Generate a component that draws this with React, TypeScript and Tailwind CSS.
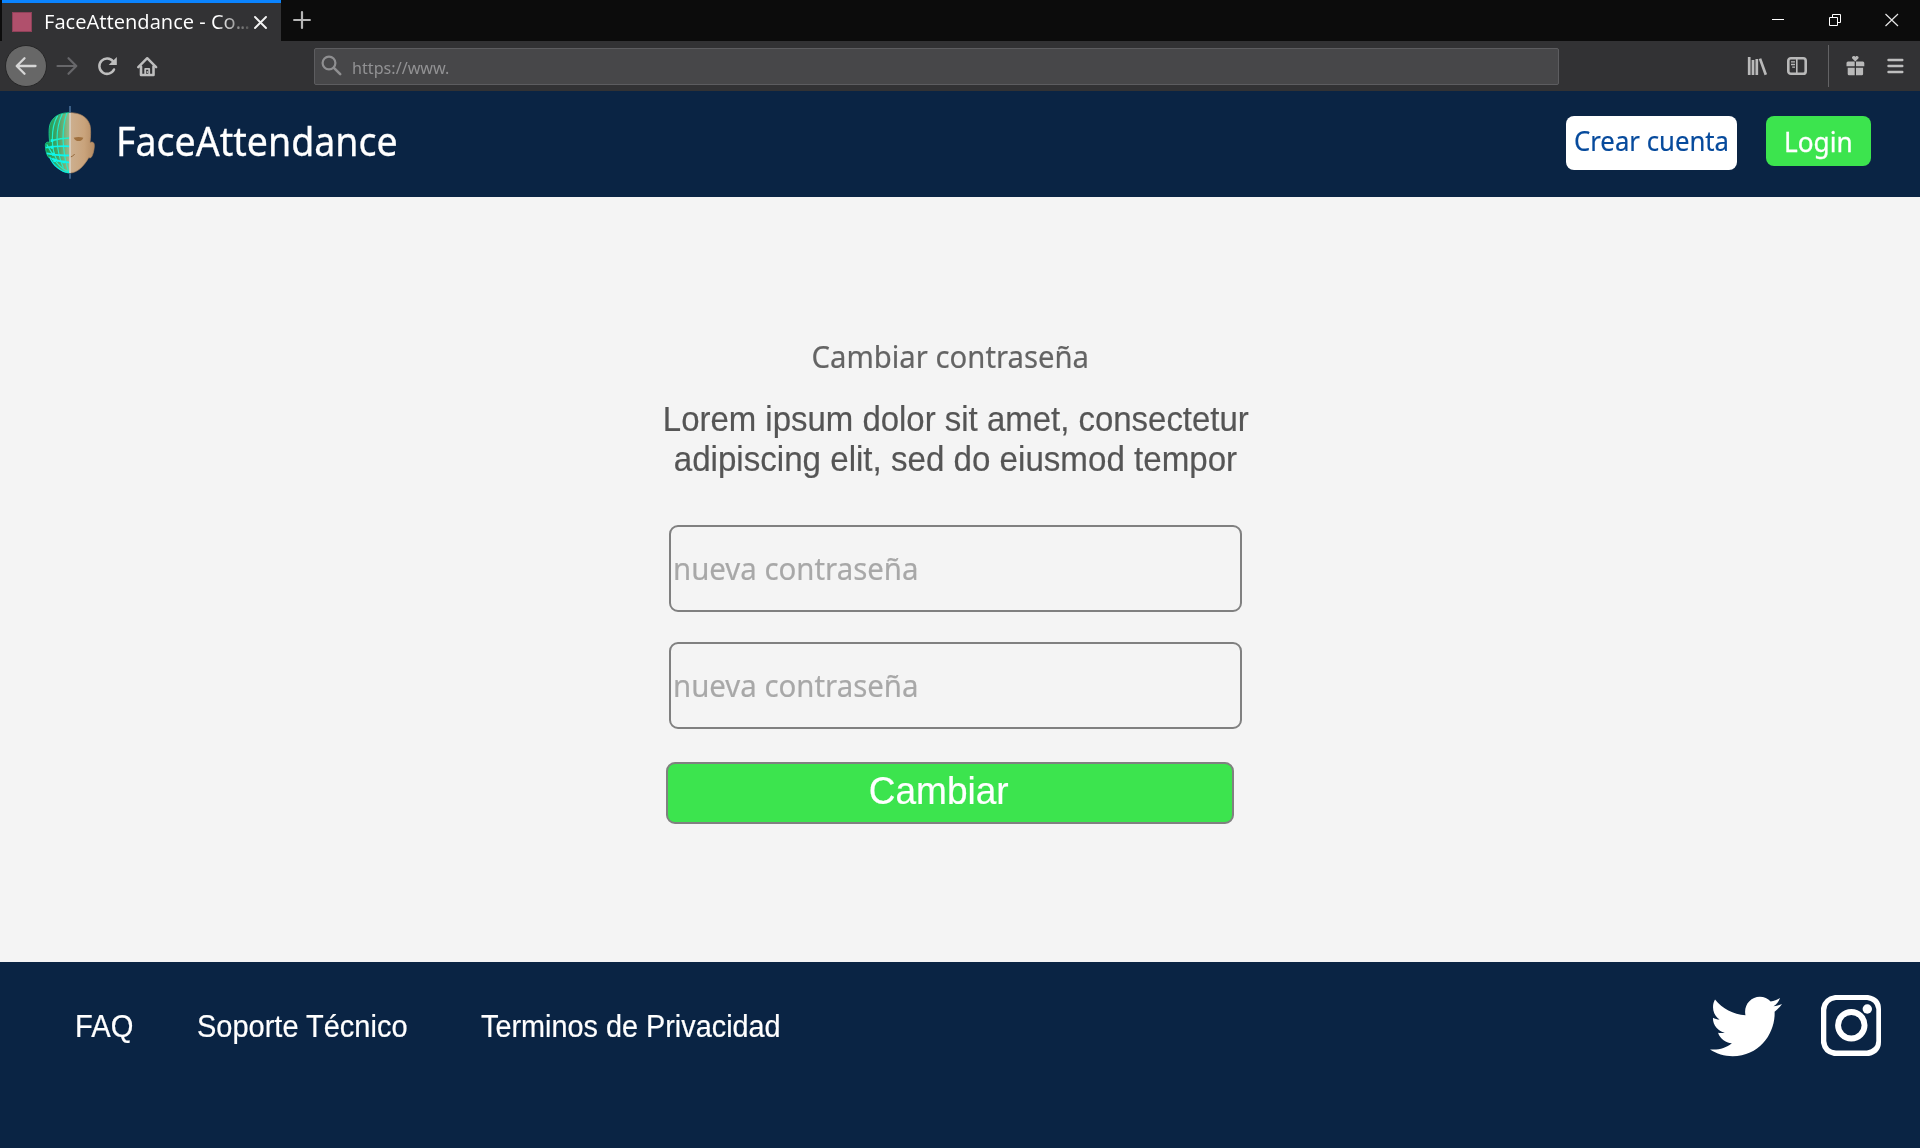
import React from "react";
import { FaTwitter } from "react-icons/fa";

const noto = "font-['Noto_Sans',sans-serif]";

function TitleBar() {
  return (
    <div className="flex h-[41px] items-stretch justify-between bg-[#0c0c0c]">
      <div className="flex">
        <div className="ml-[2px] flex w-[279px] items-center border-t-[3px] border-[#0a84ff] bg-[#323234] pl-[10px]">
          <div className="size-5 border border-[#8f4159] bg-[#b0506c]" />
          <div className={`${noto} ml-[11px] w-[206px] shrink-0 bg-linear-to-r from-white from-85% to-[#555555] bg-clip-text pl-px text-[20px] leading-[34px] whitespace-nowrap text-transparent`}>
            FaceAttendance - Co<span className="tracking-[-1px]">...</span>
          </div>
          <svg className="ml-[5px] shrink-0" width="13" height="13" viewBox="0 0 13 13" stroke="#f4f4f4" strokeWidth="1.900" strokeLinecap="round">
            <path d="M1 1l11 11M12 1L1 12" />
          </svg>
        </div>
        <svg className="mt-[11px] ml-[12px]" width="18" height="18" viewBox="0 0 18 18" stroke="#b6b6b6" strokeWidth="2.2" strokeLinecap="round">
          <path d="M9 1.1v15.8M1.1 9h15.8" />
        </svg>
      </div>
      <div className="flex items-start gap-[44px] pt-[13px] pr-[21px]">
        <svg width="13" height="14" viewBox="0 0 13 14">
          <path d="M0 6.5h12" stroke="#fff" />
        </svg>
        <svg className="mr-[-1px]" width="13" height="14" viewBox="0 0 13 14" fill="none" stroke="#fff">
          <path d="M.5 4.5h8v8h-8zM3.5 4.500v-3h8v8h-3" />
        </svg>
        <svg width="14" height="14" viewBox="0 0 14 14" stroke="#e6e6e6" strokeWidth="1.2">
          <path d="M.5 1l12.500 12M13 1L.5 13" />
        </svg>
      </div>
    </div>
  );
}

function ToolBar() {
  return (
    <div className="flex h-[50px] items-center bg-[#323234]">
      <div className="ml-[5px] flex size-[42px] items-center justify-center rounded-full border border-[#262627] bg-[#676767]">
        <svg className="mr-px" width="22" height="20" viewBox="0 0 22 20" fill="none" stroke="#d6d6d6" strokeWidth="2.3" strokeLinecap="round" strokeLinejoin="round">
          <path d="M20.500 10H2M9.500 2.200L1.700 10l7.800 7.800" />
        </svg>
      </div>
      <svg className="ml-[9px]" width="22" height="20" viewBox="0 0 22 20" fill="none" stroke="#67676a" strokeWidth="2.200" strokeLinecap="round" strokeLinejoin="round">
        <path d="M1.500 10H20M12.500 2.200l7.800 7.800-7.800 7.800" />
      </svg>
      <svg className="ml-[19px]" width="21" height="20" viewBox="0 0 21 20" fill="none">
        <path d="M16.200 5.500A7.700 7.700 0 1 0 17 13.500" stroke="#bebebe" strokeWidth="2.500" strokeLinecap="round" />
        <path d="M19.800 1v7.900h-8.100z" fill="#bebebe" />
      </svg>
      <svg className="ml-[19px]" width="21" height="21" viewBox="0 0 21 21" fill="none" stroke="#bebebe" strokeLinejoin="round" strokeLinecap="round">
        <path d="M1.300 11.200l8.900-9 8.900 9" strokeWidth="2.400" />
        <path d="M4 10.500v8.500h12.500v-8.500" strokeWidth="2.600" />
        <path d="M8.200 19v-6.200h4V19" strokeWidth="1.800" />
        <path d="M10.300 15.500v1" strokeWidth="1.200" />
      </svg>
      <div className="ml-[156px] flex h-[37px] w-[1245px] items-center rounded-[2px] border border-[#5d5d60] bg-[#474749]">
        <svg className="ml-[6px]" width="22" height="22" viewBox="0 0 22 22" fill="none" stroke="#8f8f91" strokeLinecap="round">
          <circle cx="8" cy="8" r="6.400" strokeWidth="2.200" />
          <path d="M12.900 12.900l6.300 6.300" strokeWidth="2.600" />
        </svg>
        <span className={`${noto} mt-[4px] ml-[9px] origin-left scale-x-[.95] text-[17px] leading-6 text-[#929294]`}>https://www.</span>
      </div>
      <svg className="ml-[188px]" width="21" height="20" viewBox="0 0 21 20" fill="none" stroke="#b9b9b9" strokeWidth="2.700">
        <path d="M2.200 1v18M6 4v15M9.800 3v16M13 2.600l5.800 16.200" />
      </svg>
      <svg className="ml-[18px]" width="22" height="20" viewBox="0 0 22 20" fill="none" stroke="#b9b9b9">
        <rect x="2.300" y="2.200" width="17.400" height="15.600" rx="2.600" strokeWidth="2.600" />
        <path d="M10.800 2v16" strokeWidth="1.600" />
        <path d="M5 5.800h4M5 8.500h4M6.200 11.200H9" strokeWidth="1.300" />
      </svg>
      <div className="ml-[20px] h-[42px] w-px bg-[#636365]" />
      <svg className="ml-[17px]" width="19" height="21" viewBox="0 0 19 21" fill="#b9b9b9">
        <path d="M9.300 5.600L6.300 2.600a1.700 1.700 0 0 1 3-1.700 1.700 1.700 0 0 1 3 1.700z" />
        <path d="M2 5.500h6.700v4.700H.5V7A1.500 1.500 0 0 1 2 5.500zM10 5.500h6.800a1.500 1.500 0 0 1 1.500 1.500v3.200H10zM1.700 11.700h7v7.600H3A1.300 1.300 0 0 1 1.700 18zM10 11.700h7.100V18a1.300 1.300 0 0 1-1.300 1.300H10z" />
      </svg>
      <svg className="ml-[22px]" width="17" height="16" viewBox="0 0 17 16" stroke="#bebebe" strokeWidth="2.400" strokeLinecap="round">
        <path d="M1.500 2h13.800M1.500 8h13.800M1.500 14h13.800" />
      </svg>
    </div>
  );
}

const head =
  "M89 38C62 38 37 48 29 76c-3 14-2 34 0 52-6-4-13-1-13 8 0 12 4 28 8 34 3 4 7 4 9 3 4 10 16 25 28 35 9 7 18 11 28 11s20-4 29-11c12-10 23-25 28-35 3 1 7 1 9-3 4-6 8-22 8-34 0-9-7-12-13-8 2-18 3-38 0-52-8-28-34-38-61-38z";

function FaceLogo() {
  return (
    <svg width="60" height="90" viewBox="0 0 180 270" fill="none">
      <defs>
        <linearGradient id="mesh" x1="16" x2="89" y1="0" y2="0" gradientUnits="userSpaceOnUse">
          <stop offset="0" stopColor="#169a50" />
          <stop offset=".5" stopColor="#42a466" />
          <stop offset="1" stopColor="#9db98a" />
        </linearGradient>
        <linearGradient id="skin" x1="89" x2="163" y1="0" y2="0" gradientUnits="userSpaceOnUse">
          <stop offset="0" stopColor="#cdb090" />
          <stop offset=".6" stopColor="#c9a37b" />
          <stop offset="1" stopColor="#b58c64" />
        </linearGradient>
        <clipPath id="left"><path d="M0 0h89v270H0z" /></clipPath>
        <clipPath id="right"><path d="M89 0h91v270H89z" /></clipPath>
        <clipPath id="face"><path d={head} /></clipPath>
      </defs>
      <g clipPath="url(#right)">
        <path d={head} fill="url(#skin)" stroke="#b48a62" strokeWidth="2" />
        <path d="M89 172q10-2 15-10" stroke="#94683c" strokeWidth="3" />
        <path d="M101 113q15-4 29 0-4 10-14 10t-15-10z" fill="#a0713f" />
      </g>
      <g clipPath="url(#left)">
        <path d={head} fill="url(#mesh)" stroke="#16d493" strokeWidth="2.500" />
        <g clipPath="url(#face)" stroke="#1df0cf" strokeWidth="3.500">
          <path d="M53 47c-14 24-18 55-15 90 2 18 8 36 16 50M67 41c-13 28-18 68-14 100 3 20 8 42 17 62M81 38c-10 30-14 70-10 104 2 30 8 52 16 77" />
          <path d="M34 122q28-8 56-8" strokeWidth="5" />
          <path d="M16 143q38-6 74-4M20 160q34 8 70 6M32 176q28 10 58 12" strokeWidth="5.500" stroke="#0ef4ee" />
          <path d="M20 133l18 30M40 174q18 30 48 43" />
        </g>
        <path d="M29 170C38 196 64 217 88 218" stroke="#0de9de" strokeWidth="4" />
        <path d="M32 118h8v8h-8zM32 137h8v9h-8zM36 158h8v9h-8zM40 178h8v8h-8zM67 182h8v8h-8z" fill="#0ff7ea" />
      </g>
      <path d="M90 38v181" stroke="#d9d0c4" strokeWidth="5" />
      <path d="M90 18v20M90 220v16" stroke="#446a93" strokeWidth="5" />
    </svg>
  );
}

function Header() {
  return (
    <header className={`${noto} flex h-[106px] items-start justify-between bg-[#0a2444] pr-[49px] pl-10`}>
      <div className="flex items-start pt-[9px]">
        <FaceLogo />
        <h1 className="mt-[21px] ml-[16px] origin-left scale-x-[.95] text-[39.500px] leading-10 text-white [-webkit-text-stroke:0.3px]">FaceAttendance</h1>
      </div>
      <div className="flex items-start gap-[29px] pt-[25px]">
        <button className="h-[54px] w-[171px] rounded-[8px] bg-white pb-[5px] pl-[8px] text-left text-[27px] whitespace-nowrap text-[#064a9c]">
          <span className="inline-block origin-left scale-x-[.953] leading-[48px] [-webkit-text-stroke:0.2px]">Crear cuenta</span>
        </button>
        <button className="h-[50px] w-[105px] rounded-[8px] bg-[#3ce44e] pl-[18px] text-left text-[27px] text-white">
          <span className="mt-px inline-block origin-left scale-x-[.97] leading-[49px] [-webkit-text-stroke:0.3px]">Login</span>
        </button>
      </div>
    </header>
  );
}

function PasswordField() {
  return (
    <div className={`${noto} ml-[9px] flex h-[87px] w-[573px] items-center rounded-[9px] border-2 border-[#808080] pb-px pl-px text-[30px] text-[#a8a8a8]`}>
      <span className="ml-px origin-left scale-x-[.98] [-webkit-text-stroke:0.2px]">nueva contraseña</span>
    </div>
  );
}

function ChangePassword() {
  return (
    <main className="flex h-[765px] flex-col items-center bg-[#f4f4f4] pt-[138px]">
      <div className="flex w-[600px] flex-col">
        <h2 className={`${noto} w-[581px] pt-px text-center text-[31.500px] leading-10 text-[#646464]`}>
          <span className="inline-block scale-x-[.93] [-webkit-text-stroke:0.2px]">Cambiar contraseña</span>
        </h2>
        <p className="mt-[23px] flex w-[592px] flex-col items-center text-[34.500px] leading-10 whitespace-nowrap text-[#555555] [-webkit-text-stroke:0.2px]">
          <span className="scale-x-[.955]">Lorem ipsum dolor sit amet, consectetur</span>
          <span className="mr-[2px] scale-x-[.96]">adipiscing elit, sed do eiusmod tempor</span>
        </p>
        <div className="mt-[46px] flex flex-col gap-[30px]">
          <PasswordField />
          <PasswordField />
        </div>
        <button className="mt-[33px] ml-[6px] h-[62px] w-[568px] rounded-[9px] border-2 border-[#808080] bg-[#3ce44e] pr-[23px] pb-[4px] text-[39px] leading-[52px] text-white">
          <span className="inline-block scale-x-[.95] [-webkit-text-stroke:0.2px]">Cambiar</span>
        </button>
      </div>
    </main>
  );
}

function Footer() {
  return (
    <footer className="flex h-[186px] items-start justify-between bg-[#0a2444] pr-[39px] pl-[75px] text-white">
      <nav className="flex pt-[45px] text-[31px] leading-10 whitespace-nowrap [-webkit-text-stroke:0.2px]">
        <a className="w-[122px] origin-left scale-x-[.94]">FAQ</a>
        <a className="w-[284px] origin-left scale-x-[.935]">Soporte Técnico</a>
        <a className="origin-left scale-x-[.93]">Terminos de Privacidad</a>
      </nav>
      <div className="flex items-start gap-[39px] pt-[33px]">
        <FaTwitter className="mt-[-5px] h-[73px] w-[72px]" preserveAspectRatio="none" />
        <svg width="60" height="61" viewBox="0 0 60 61" fill="currentColor">
          <path
            fillRule="evenodd"
            d="M14 0H47Q60 2 60 14V47Q60 58 48 61H13Q2 59 0 48V13Q2 2 14 0zM15 5Q6 6 5.300 15V46Q6 55 15 55.500H46Q55 54 55.300 46V14Q54 6 46 5z"
          />
          <path fillRule="evenodd" d="M30.300 14a16.200 16.200 0 1 0 0 32.400 16.200 16.200 0 0 0 0-32.400zm0 5.900a10.300 10.300 0 1 1 0 20.600 10.300 10.300 0 0 1 0-20.600z" />
          <circle cx="46.300" cy="14" r="4.700" />
        </svg>
      </div>
    </footer>
  );
}

export default function App() {
  return (
    <div className="h-[1148px] w-[1920px] overflow-hidden font-['Liberation_Sans',Arial,sans-serif]">
      <TitleBar />
      <ToolBar />
      <Header />
      <ChangePassword />
      <Footer />
    </div>
  );
}
